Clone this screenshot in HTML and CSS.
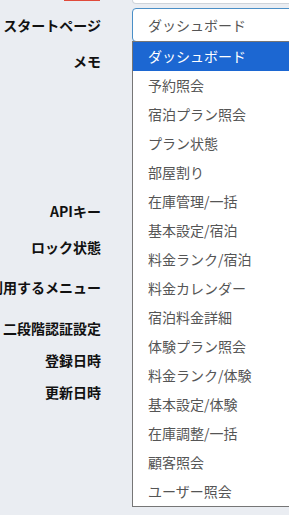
FILE: index.html
```html
<!DOCTYPE html>
<html lang="ja">
<head>
    <meta charset="UTF-8">
    <meta name="viewport" content="width=device-width, initial-scale=1.0">
    <title>ユーザー編集</title>
    <link rel="stylesheet" href="styles.css">
</head>
<body>
    <div class="form">
        <div class="row row-top">
            <div class="label"><span class="required"></span></div>
            <div class="field"><div class="input-end"></div></div>
        </div>

        <div class="row row-start">
            <div class="label"><span>スタートページ</span></div>
            <div class="field">
                <div class="select">ダッシュボード</div>
                <ul class="dropdown">
                    <li class="selected">ダッシュボード</li>
                    <li>予約照会</li>
                    <li>宿泊プラン照会</li>
                    <li>プラン状態</li>
                    <li>部屋割り</li>
                    <li>在庫管理/一括</li>
                    <li>基本設定/宿泊</li>
                    <li>料金ランク/宿泊</li>
                    <li>料金カレンダー</li>
                    <li>宿泊料金詳細</li>
                    <li>体験プラン照会</li>
                    <li>料金ランク/体験</li>
                    <li>基本設定/体験</li>
                    <li>在庫調整/一括</li>
                    <li>顧客照会</li>
                    <li>ユーザー照会</li>
                </ul>
            </div>
        </div>

        <div class="row row-memo">
            <div class="label"><span>メモ</span></div>
            <div class="field"></div>
        </div>
        <div class="row row-api">
            <div class="label"><span>APIキー</span></div>
            <div class="field"></div>
        </div>
        <div class="row row-lock">
            <div class="label"><span>ロック状態</span></div>
            <div class="field"></div>
        </div>
        <div class="row row-menu">
            <div class="label"><span>利用するメニュー</span></div>
            <div class="field"></div>
        </div>
        <div class="row row-2fa">
            <div class="label"><span>二段階認証設定</span></div>
            <div class="field"></div>
        </div>
        <div class="row row-created">
            <div class="label"><span>登録日時</span></div>
            <div class="field"></div>
        </div>
        <div class="row row-updated">
            <div class="label"><span>更新日時</span></div>
            <div class="field"></div>
        </div>
    </div>
</body>
</html>
```

FILE: styles.css
```css
* {
    box-sizing: border-box;
}

html {
    overflow: hidden;
}

body {
    margin: 0;
    min-height: 100vh;
    background-color: #eaedf2;
    color: #111111;
    font-family: "Noto Sans CJK JP", "Noto Sans", sans-serif;
    font-size: 14px;
}

.form {
    display: flex;
    flex-direction: column;
    width: 360px;
}

.row {
    display: flex;
    align-items: center;
}

.label {
    flex: none;
    width: 101px;
    display: flex;
    justify-content: flex-end;
    white-space: nowrap;
    font-weight: bold;
    line-height: 20px;
}

.field {
    flex: 1;
    margin-left: 31px;
    position: relative;
    align-self: stretch;
}

/* 上の入力欄の下端だけ見えている */
.row-top {
    height: 4px;
    margin-bottom: 4px;
    align-items: flex-start;
}

.required {
    display: block;
    width: 36px;
    height: 1px;
    margin-right: 1px;
    background-color: #e04a3a;
}

.input-end {
    height: 4px;
    background-color: #ffffff;
    border: 1px solid #cfd4da;
    border-top: none;
    border-radius: 0 0 4px 4px;
}

.row-start {
    height: 34px;
}

.select {
    height: 34px;
    padding: 0 15px;
    line-height: 32px;
    background-color: #ffffff;
    border: 1px solid #4a8fc7;
    border-radius: 4px;
    color: #555555;
}

.dropdown {
    position: absolute;
    top: 33px;
    left: 0;
    width: 200px;
    margin: 0;
    padding: 0;
    list-style: none;
    background-color: #ffffff;
    border: 1px solid #767676;
    z-index: 10;
}

.dropdown li {
    height: 29px;
    padding: 0 15px;
    line-height: 29px;
    color: #555555;
    white-space: nowrap;
}

.dropdown li.selected {
    background-color: #1c67d2;
    color: #ffffff;
}

.row-memo {
    height: 151px;
    align-items: flex-start;
}

.row-memo .label {
    padding-top: 9px;
}

.row-api {
    height: 36px;
}

.row-lock {
    height: 36px;
}

.row-menu {
    height: 44px;
}

.row-2fa {
    height: 38px;
}

.row-created {
    height: 26px;
}

.row-updated {
    height: 38px;
}
```
